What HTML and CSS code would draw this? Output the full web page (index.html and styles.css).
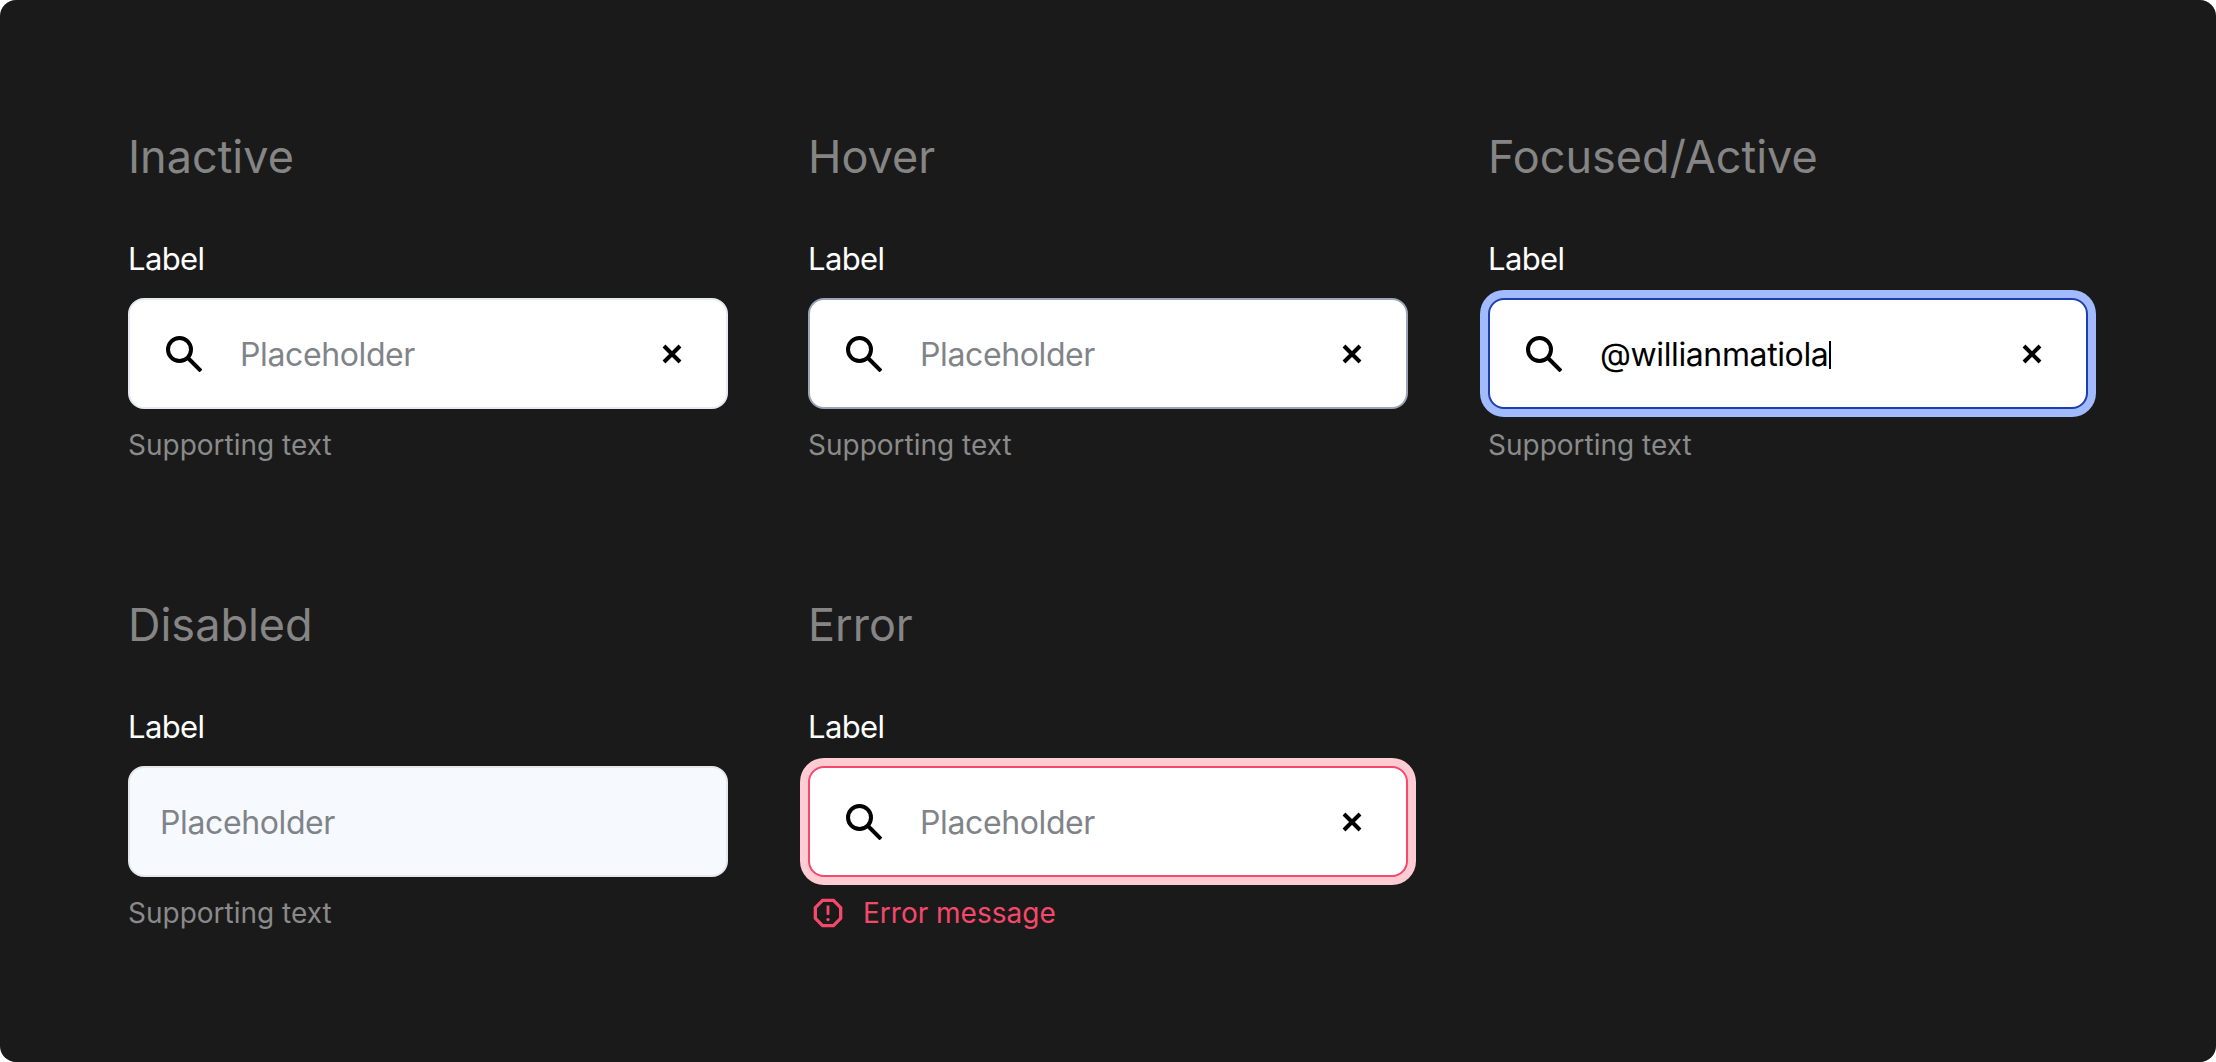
FILE: index.html
```html
<!DOCTYPE html>
<html lang="en">
<head>
<meta charset="utf-8">
<title>Input states</title>
<link rel="stylesheet" href="styles.css">
</head>
<body>
<svg class="defs" width="0" height="0" aria-hidden="true">
  <symbol id="search" viewBox="0 0 36 36"><circle cx="13.5" cy="13.5" r="11.5" fill="none" stroke="currentColor" stroke-width="4"/><path d="M22 22 35 35" fill="none" stroke="currentColor" stroke-width="4"/></symbol>
  <symbol id="close" viewBox="0 0 20 20"><path d="M2 2 18 18M18 2 2 18" fill="none" stroke="currentColor" stroke-width="4"/></symbol>
</svg>
<main class="board">
  <section class="state">
    <h2 class="state-title">Inactive</h2>
    <label class="label">Label</label>
    <div class="field">
      <svg class="icon-search"><use href="#search"/></svg>
      <span class="placeholder">Placeholder</span>
      <svg class="icon-close"><use href="#close"/></svg>
    </div>
    <p class="help">Supporting text</p>
  </section>
  <section class="state">
    <h2 class="state-title">Hover</h2>
    <label class="label">Label</label>
    <div class="field field-hover">
      <svg class="icon-search"><use href="#search"/></svg>
      <span class="placeholder">Placeholder</span>
      <svg class="icon-close"><use href="#close"/></svg>
    </div>
    <p class="help">Supporting text</p>
  </section>
  <section class="state">
    <h2 class="state-title">Focused/Active</h2>
    <label class="label">Label</label>
    <div class="field field-focus">
      <svg class="icon-search"><use href="#search"/></svg>
      <span class="value">@willianmatiola<span class="caret"></span></span>
      <svg class="icon-close"><use href="#close"/></svg>
    </div>
    <p class="help">Supporting text</p>
  </section>
  <section class="state">
    <h2 class="state-title">Disabled</h2>
    <label class="label">Label</label>
    <div class="field field-disabled">
      <span class="placeholder">Placeholder</span>
    </div>
    <p class="help">Supporting text</p>
  </section>
  <section class="state">
    <h2 class="state-title">Error</h2>
    <label class="label">Label</label>
    <div class="field field-error">
      <svg class="icon-search"><use href="#search"/></svg>
      <span class="placeholder">Placeholder</span>
      <svg class="icon-close"><use href="#close"/></svg>
    </div>
    <p class="help help-error">
      <svg class="icon-alert" viewBox="0 0 32 32"><path d="M10.2 2.5h11.6l7.7 7.7v11.6l-7.7 7.7H10.2l-7.7-7.7V10.2z" fill="none" stroke="currentColor" stroke-width="3.5"/><path d="M16 8v10" stroke="currentColor" stroke-width="3" fill="none"/><circle cx="16" cy="23" r="1.8" fill="currentColor"/></svg>
      Error message
    </p>
  </section>
</main>
</body>
</html>
```
FILE: styles.css
```css
* { box-sizing: border-box; }
html, body { margin: 0; padding: 0; background: #fff; }
body { font-family: Inter, "Liberation Sans", sans-serif; }
.defs { position: absolute; }
.board {
  width: 2216px;
  height: 1062px;
  background: #1a1a1a;
  border-radius: 16px;
  padding: 127px 128px 0;
  display: grid;
  grid-template-columns: repeat(3, 600px);
  column-gap: 80px;
  row-gap: 132px;
  align-content: start;
}
.state { display: flex; flex-direction: column; align-items: stretch; }
.state-title {
  margin: 0;
  font-size: 45px;
  line-height: 60px;
  font-weight: 400;
  color: #858585;
}
.label {
  margin-top: 54px;
  font-size: 31px;
  letter-spacing: -0.02em;
  line-height: 36px;
  color: #fff;
}
.field {
  margin-top: 21px;
  height: 111px;
  border-radius: 16px;
  background: #fff;
  border: 2px solid #e6eaf0;
  display: flex;
  align-items: center;
  padding: 0 36px;
  color: #000;
}
.field-hover { border-color: #9aa6b8; }
.field-focus { border-color: #1d3fae; box-shadow: 0 0 0 8px #a2bbff; }
.field-error { border-color: #f5486a; box-shadow: 0 0 0 8px #ffccd3; }
.field-disabled { background: #f6fafe; border-color: #e3e8ee; padding: 0 30px; }
.icon-search { width: 36px; height: 36px; flex: none; margin-top: 1px; }
.icon-close { width: 20px; height: 20px; flex: none; margin-left: auto; margin-right: 8px; }
.placeholder, .value { font-size: 32px; letter-spacing: -0.012em; line-height: 40px; padding-top: 2px; }
.icon-search + .placeholder, .icon-search + .value { margin-left: 38px; }
.placeholder { color: #808489; }
.value { color: #000; display: flex; align-items: center; }
.caret { display: inline-block; width: 2px; height: 28px; background: #000; margin-left: 1px; }
.help {
  margin: 18px 0 0;
  font-size: 28px;
  line-height: 36px;
  color: #8a8a8a;
  display: flex;
  align-items: center;
}
.help-error { color: #f5486a; }
.icon-alert { width: 30px; height: 30px; flex: none; margin-left: 5px; margin-right: 20px; }
```
